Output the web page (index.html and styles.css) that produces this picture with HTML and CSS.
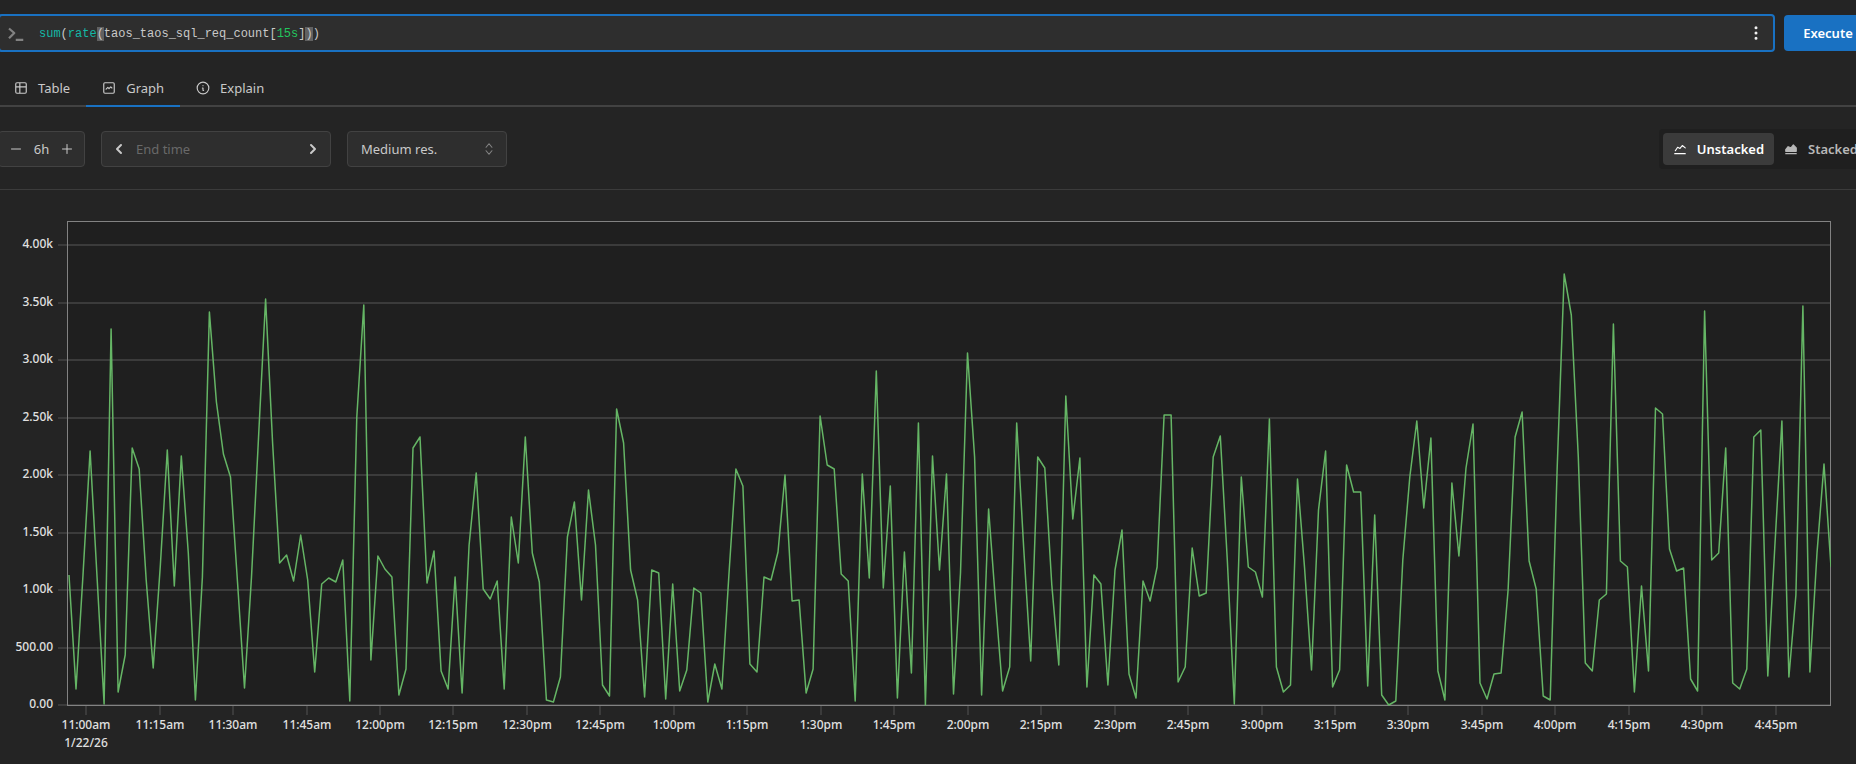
FILE: index.html
```html
<!DOCTYPE html>
<html lang="en">
<head>
<meta charset="utf-8">
<meta name="viewport" content="width=device-width, initial-scale=1">
<title>Query</title>
<link rel="stylesheet" href="styles.css">
</head>
<body>
<main class="page">
  <form class="query-row" onsubmit="return false">
    <div class="query-box">
      <svg class="icon icon-prompt" viewBox="0 0 24 24" aria-hidden="true"><path d="M4 6l7 6l-7 7M13 21h10"/></svg>
      <div class="query-editor" contenteditable="true" role="textbox" aria-label="Expression" spellcheck="false"><span class="fn">sum</span>(<span class="fn">rate</span><span class="bracket">(</span>taos_taos_sql_req_count[<span class="duration">15s</span>]<span class="bracket">)</span>)</div>
      <button class="menu-button" type="button" aria-label="Query options">
        <svg class="icon icon-dots" viewBox="0 0 24 24" aria-hidden="true"><circle cx="12" cy="5" r="1"/><circle cx="12" cy="12" r="1"/><circle cx="12" cy="19" r="1"/></svg>
      </button>
    </div>
    <button class="execute" type="submit">Execute</button>
  </form>

  <div class="tabs" role="tablist">
    <button class="tab" role="tab" type="button" aria-selected="false">
      <svg class="icon" viewBox="0 0 24 24" aria-hidden="true"><path d="M3 5a2 2 0 0 1 2 -2h14a2 2 0 0 1 2 2v14a2 2 0 0 1 -2 2h-14a2 2 0 0 1 -2 -2zM3 10h18M10 3v18"/></svg>
      Table
    </button>
    <button class="tab tab-active" role="tab" type="button" aria-selected="true">
      <svg class="icon" viewBox="0 0 24 24" aria-hidden="true"><path d="M3 5a2 2 0 0 1 2 -2h14a2 2 0 0 1 2 2v14a2 2 0 0 1 -2 2h-14a2 2 0 0 1 -2 -2zM7 14l3 -3l2 2l3 -3l2 2"/></svg>
      Graph
    </button>
    <button class="tab" role="tab" type="button" aria-selected="false">
      <svg class="icon" viewBox="0 0 24 24" aria-hidden="true"><path d="M2 12a10 10 0 1 0 20 0a10 10 0 0 0 -20 0M12 8h.01M11 12h1v4h1"/></svg>
      Explain
    </button>
  </div>

  <div class="controls">
    <div class="field range-field">
      <button class="field-button" type="button" aria-label="Decrease range"><svg class="icon icon-small" viewBox="0 0 24 24" aria-hidden="true"><path d="M3 12h18"/></svg></button>
      <input class="range-input" type="text" value="6h" aria-label="Range">
      <button class="field-button" type="button" aria-label="Increase range"><svg class="icon icon-small" viewBox="0 0 24 24" aria-hidden="true"><path d="M3 12h18M12 3v18"/></svg></button>
    </div>
    <div class="field time-field">
      <button class="field-button" type="button" aria-label="Earlier"><svg class="icon icon-step" viewBox="0 0 24 24" aria-hidden="true"><path d="M15 6l-6 6l6 6"/></svg></button>
      <input class="time-input" type="text" placeholder="End time" aria-label="End time">
      <button class="field-button" type="button" aria-label="Later"><svg class="icon icon-step" viewBox="0 0 24 24" aria-hidden="true"><path d="M9 6l6 6l-6 6"/></svg></button>
    </div>
    <div class="field res-field">
      <select class="res-select" aria-label="Resolution">
        <option>Low res.</option>
        <option selected>Medium res.</option>
        <option>High res.</option>
      </select>
      <svg class="icon icon-select" viewBox="0 0 24 24" aria-hidden="true"><path d="M7 9l5 -6l5 6M7 15l5 6l5 -6"/></svg>
    </div>
    <div class="segmented" role="group" aria-label="Stacking">
      <button class="segment segment-active" type="button" aria-pressed="true">
        <svg class="icon" viewBox="0 0 24 24" aria-hidden="true"><path d="M3 20h18M4 15l4 -6l4 2l4 -5l5 4"/></svg>
        Unstacked
      </button>
      <button class="segment" type="button" aria-pressed="false">
        <svg class="icon" viewBox="0 0 24 24" aria-hidden="true"><path d="M3 20h18"/><path class="filled" d="M3 16v-3l4 -5l5 2l4 -5l5 5v6z"/></svg>
        Stacked
      </button>
    </div>
  </div>

  <section class="chart-panel">
    <svg class="chart" id="chart" role="img" aria-label="SQL request rate over six hours"></svg>
  </section>
</main>
<script src="chart.js"></script>
</body>
</html>
```

FILE: styles.css
```css
* {
  box-sizing: border-box;
}

body {
  margin: 0;
  background: #242424;
  color: #c9c9c9;
  font-family: "Noto Sans", "Open Sans", sans-serif;
  font-size: 13px;
  line-height: 20px;
  overflow-x: hidden;
}

button,
input,
select {
  margin: 0;
  padding: 0;
  border: 0;
  background: none;
  color: inherit;
  font: inherit;
}

.page {
  padding-top: 14px;
}

.icon {
  flex: none;
  width: 14px;
  height: 14px;
  fill: none;
  stroke: currentColor;
  stroke-width: 2;
  stroke-linecap: round;
  stroke-linejoin: round;
}

.query-row {
  display: flex;
  align-items: center;
  gap: 9px;
  margin-left: -2px;
}

.query-box {
  flex: 1;
  display: flex;
  align-items: center;
  height: 38px;
  padding: 0 7px 0 6px;
  border: 2px solid #1971c2;
  border-radius: 4px;
  background: #2e2e2e;
}

.icon-prompt {
  width: 18px;
  height: 18px;
  color: #828282;
  stroke-width: 3;
  stroke-linecap: butt;
}

.query-editor {
  flex: 1;
  padding: 2px 0 0 15px;
  outline: none;
  font-family: "Liberation Mono", monospace;
  font-size: 12px;
}

.fn {
  color: #14b8a6;
}

.duration {
  color: #22c55e;
}

.bracket {
  background: #616161;
}

.menu-button {
  display: flex;
  padding: 1px;
  color: #f0f0f0;
}

.icon-dots {
  width: 18px;
  height: 18px;
}

.execute {
  width: 88px;
  height: 36px;
  margin-right: -16px;
  border-radius: 4px;
  background: #1971c2;
  color: #fff;
  font-weight: 600;
}

.tabs {
  display: flex;
  margin-top: 19px;
  border-bottom: 2px solid #424242;
}

.tab {
  display: flex;
  align-items: center;
  gap: 10px;
  height: 36px;
  margin-bottom: -2px;
  padding: 0 16px;
  border-bottom: 2px solid transparent;
}

.tab:first-child {
  padding-left: 14px;
}

.tab-active {
  border-color: #1971c2;
}

.controls {
  display: flex;
  align-items: center;
  gap: 16px;
  padding: 22px 0 20px;
  border-bottom: 1px solid #3b3b3b;
}

.field {
  display: flex;
  align-items: center;
  height: 36px;
  border: 1px solid #424242;
  border-radius: 4px;
  background: #2e2e2e;
}

.field-button {
  display: flex;
}

.range-field {
  width: 87px;
  margin-left: -2px;
  padding: 0 11px;
}

.range-input {
  flex: 1;
  width: 0;
  text-align: center;
}

.icon-small {
  width: 12px;
  height: 12px;
}

.time-field {
  width: 230px;
  padding: 0 9px;
}

.icon-step {
  width: 16px;
  height: 16px;
  stroke-width: 3;
}

.time-input {
  flex: 1;
  width: 0;
  padding-left: 9px;
}

.time-input::placeholder {
  color: #696969;
  opacity: 1;
}

.res-field {
  width: 160px;
  padding: 0 10px 0 13px;
}

.res-select {
  flex: 1;
  appearance: none;
}

.icon-select {
  color: #828282;
}

.segmented {
  display: flex;
  height: 40px;
  margin-left: auto;
  margin-right: -16px;
  padding: 4px;
  border-radius: 4px;
  background: #1f1f1f;
  font-weight: 600;
}

.segment {
  display: flex;
  align-items: center;
  gap: 10px;
  padding: 0 10px;
  border-radius: 4px;
  color: #b8b8b8;
}

.segment-active {
  background: #3b3b3b;
  color: #fff;
}

.filled {
  fill: currentColor;
}

.chart-panel {
  padding: 31px 25px 0 0;
}

.chart {
  display: block;
  width: 100%;
  height: 536px;
}

.plot-bg {
  fill: #1f1f1f;
}

.plot-frame {
  fill: none;
  stroke: #828282;
}

.grid-line {
  stroke: #3b3b3b;
  stroke-width: 2;
}

.series {
  fill: none;
  stroke: #65b565;
  stroke-width: 1.5;
  stroke-linejoin: round;
}

.label {
  fill: #e0e0e0;
  font-size: 12px;
  font-weight: 500;
}

.label-y {
  text-anchor: end;
}

.label-x {
  text-anchor: middle;
}
```

FILE: chart.js
```js
// Samples are stored in steps of 8.696 requests, one every 86 seconds.
const UNIT = 8.696;
const STEP_MINUTES = 86 / 60;
const samples = [
  130, 16, 130, 254, 127, 1, 376, 13, 50, 257, 236, 125, 37, 139, 255, 119, 249, 152, 5, 128,
  393, 303, 251, 228, 123, 17, 128, 267, 406, 262, 142, 150, 124, 170, 125, 33, 121, 127, 123, 145,
  4, 288, 400, 45, 149, 136, 128, 10, 36, 257, 268, 122, 154, 34, 16, 128, 12, 160, 232, 116,
  106, 124, 16, 188, 142, 268, 152, 123, 5, 3, 28, 168, 203, 105, 215, 160, 20, 9, 296, 262,
  135, 105, 8, 135, 132, 6, 121, 14, 35, 117, 112, 3, 41, 16, 130, 236, 219, 41, 33, 128,
  125, 153, 230, 104, 105, 12, 36, 289, 240, 236, 131, 124, 4, 231, 127, 334, 117, 219, 7, 153,
  32, 282, 0, 249, 135, 231, 11, 132, 352, 248, 10, 196, 102, 14, 38, 282, 157, 44, 248, 237,
  120, 40, 309, 186, 247, 18, 130, 121, 20, 135, 175, 31, 7, 124, 104, 138, 290, 290, 23, 38,
  157, 109, 112, 248, 269, 145, 1, 228, 138, 133, 108, 286, 38, 13, 20, 226, 138, 35, 195, 254,
  18, 35, 240, 213, 213, 19, 190, 10, 0, 4, 145, 228, 284, 197, 267, 34, 5, 222, 149, 237,
  281, 22, 6, 31, 32, 115, 268, 293, 144, 116, 9, 5, 238, 431, 390, 248, 42, 34, 105, 111,
  381, 144, 138, 13, 119, 34, 297, 291, 156, 134, 137, 26, 14, 394, 145, 152, 257, 22, 16, 36,
  268, 275, 29, 158, 284, 28, 110, 399, 33, 152, 241, 138
];

const svg = document.getElementById("chart");
const LEFT = 67;
const TOP = 1;
const BOTTOM = 484;
const Y_MAX = 4200;
const FIRST_TICK = 3.5;
const SPAN = (samples.length - 1) * STEP_MINUTES;

function add(name, attrs, text) {
  const el = document.createElementNS("http://www.w3.org/2000/svg", name);
  for (const key in attrs) el.setAttribute(key, attrs[key]);
  if (text) el.textContent = text;
  svg.appendChild(el);
}

function draw() {
  svg.textContent = "";
  const right = svg.clientWidth - 1;
  const x0 = LEFT + 2;
  const x = minutes => x0 + minutes / SPAN * (right + 1 - x0);
  const y = value => BOTTOM - value / Y_MAX * (BOTTOM - TOP);

  add("rect", { class: "plot-bg", x: LEFT, y: TOP, width: right - LEFT, height: BOTTOM - TOP });

  for (let v = 0; v <= 4000; v += 500) {
    const gy = Math.round(y(v));
    add("line", { class: "grid-line", x1: LEFT - 9, x2: right, y1: gy, y2: gy });
    const text = v >= 1000 ? (v / 1000).toFixed(2) + "k" : v.toFixed(2);
    add("text", { class: "label label-y", x: LEFT - 14, y: gy + 3 }, text);
  }

  for (let i = 0; i < 24; i++) {
    const tx = Math.round(x(FIRST_TICK + i * 15));
    const hour = 11 + Math.floor(i / 4);
    const minute = String(i % 4 * 15).padStart(2, "0");
    const text = (hour > 12 ? hour - 12 : hour) + ":" + minute + (hour < 12 ? "am" : "pm");
    add("line", { class: "grid-line", x1: tx, x2: tx, y1: BOTTOM, y2: BOTTOM + 10 });
    add("text", { class: "label label-x", x: tx, y: BOTTOM + 24 }, text);
    if (i === 0) add("text", { class: "label label-x", x: tx, y: BOTTOM + 42 }, "1/22/26");
  }

  add("rect", { class: "plot-frame", x: LEFT + 0.5, y: TOP - 0.5, width: right - LEFT, height: BOTTOM - TOP + 1 });
  const points = samples.map((s, i) => x(i * STEP_MINUTES).toFixed(1) + "," + y(s * UNIT).toFixed(1));
  add("polyline", { class: "series", points: points.join(" ") });
}

draw();
window.addEventListener("resize", draw);
```
